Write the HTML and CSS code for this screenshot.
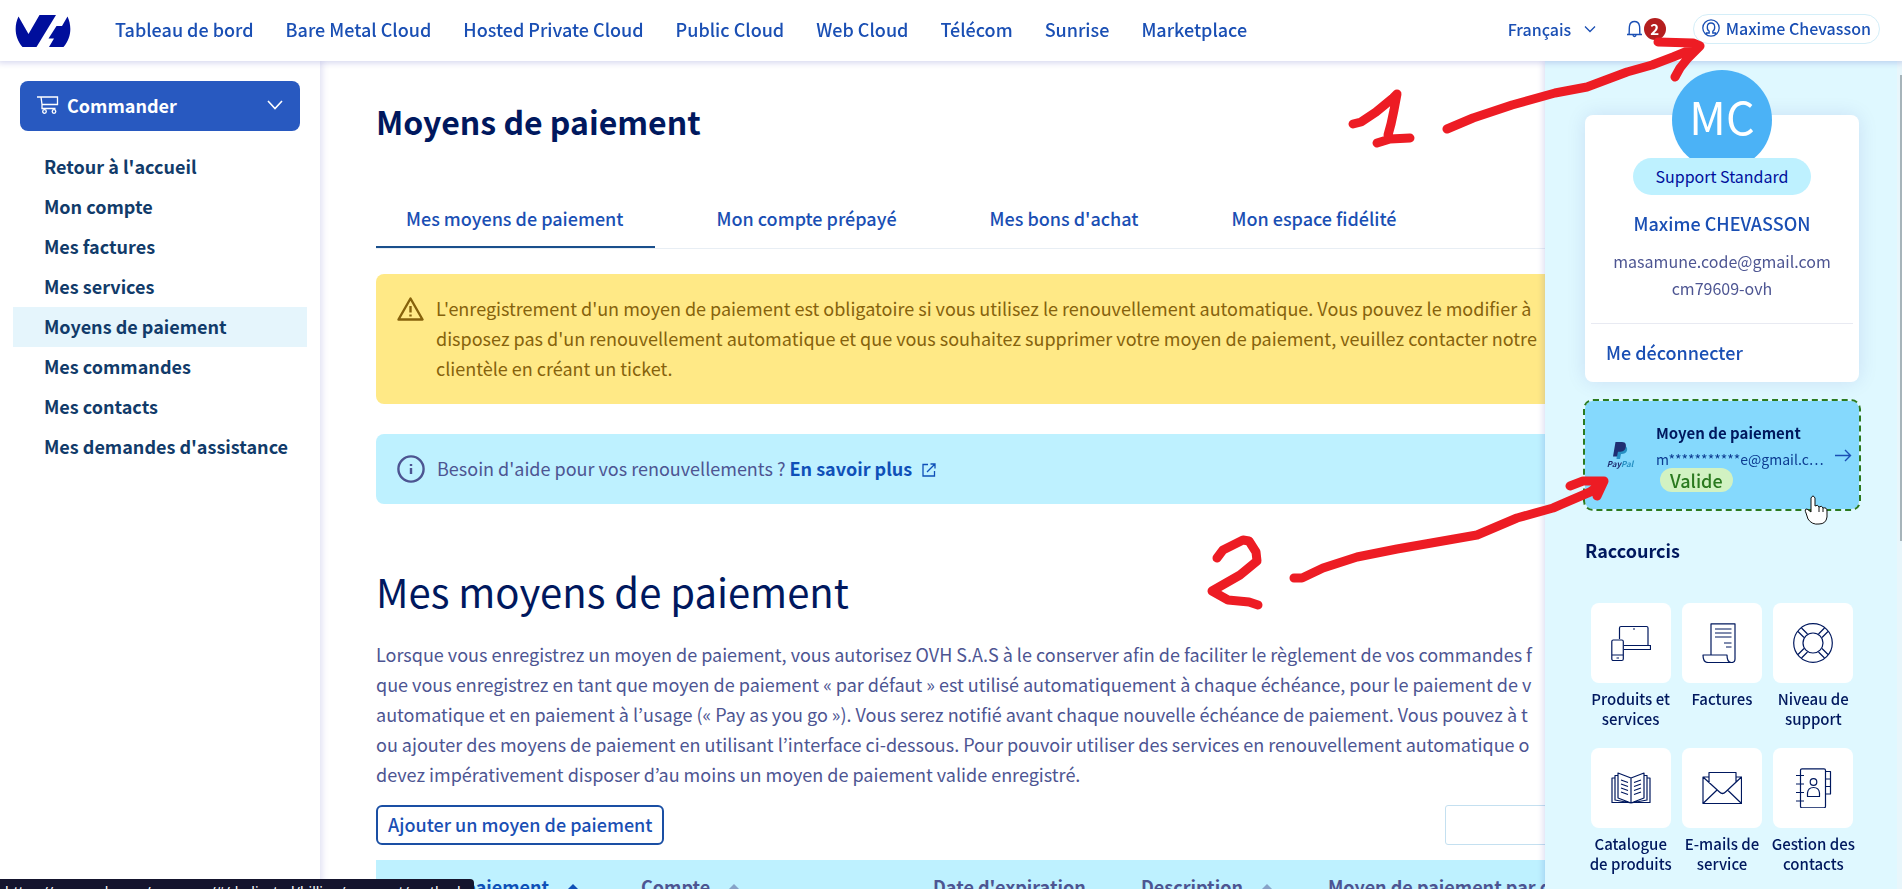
FILE: index.html
```html
<!DOCTYPE html>
<html lang="fr">
<head>
<meta charset="utf-8">
<title>Moyens de paiement</title>
<link rel="stylesheet" href="styles.css">
</head>
<body>
<header class="topbar">
  <a class="logo" href="#" aria-label="OVHcloud">
    <svg width="56" height="34" viewBox="0 0 56 34"><path fill="#000e9c" d="M3.500 2.500 L13.500 20 L24.500 1 H41 L21.500 33 H7.500 C-.5 24 -1 12 3.500 2.500Z M52.500 2.500 C57 12 56.500 24 48.500 33 H34 L39 24.500 H33.500 L41.500 12 H47Z"/></svg>
  </a>
  <nav class="mainnav">
    <a href="#">Tableau de bord</a>
    <a href="#">Bare Metal Cloud</a>
    <a href="#">Hosted Private Cloud</a>
    <a href="#">Public Cloud</a>
    <a href="#">Web Cloud</a>
    <a href="#">Télécom</a>
    <a href="#">Sunrise</a>
    <a href="#">Marketplace</a>
  </nav>
  <div class="tools">
    <div class="lang">
      <select aria-label="Langue"><option>Français</option></select>
      <svg width="12" height="8" viewBox="0 0 12 8"><path d="M1 1.500 L6 6.500 L11 1.500" fill="none" stroke="currentColor" stroke-width="1.300"/></svg>
    </div>
    <button class="bell" aria-label="Notifications">
      <svg width="17" height="18" viewBox="0 0 17 18"><path d="M1 14.500 H16 M3 14.500 C3.500 12 3 9 3.500 6 C4 3 6 1.500 8.500 1.500 S13 3 13.500 6 C14 9 13.500 12 14 14.500 M7 15 C7.200 17 9.800 17 10 15" fill="none" stroke="currentColor" stroke-width="1.400"/></svg>
      <span class="count">2</span>
    </button>
    <button class="user">
      <svg width="18" height="18" viewBox="0 0 18 18"><g fill="none" stroke="currentColor" stroke-width="1.300"><circle cx="9" cy="9" r="8.200"/><path d="M4.500 15.500 V14 H7.200 V12.200 C4.500 10.500 4.300 4 9 4 S13.500 10.500 10.800 12.200 V14 H13.500 V15.500"/></g></svg>
      <span>Maxime Chevasson</span>
    </button>
  </div>
</header>

<div class="layout">
  <aside class="sidebar">
    <button class="order">
      <svg width="22" height="18" viewBox="0 0 22 18"><g fill="none" stroke="currentColor" stroke-width="1.300"><path d="M0 1 H4 L5 8.500 V12.500 H18.500 M4 1 H20.500 V8.500 H5"/><circle cx="7.500" cy="15.500" r="1.800"/><circle cx="17" cy="15.500" r="1.800"/></g></svg>
      <span>Commander</span>
      <svg class="chev" width="16" height="10" viewBox="0 0 16 10"><path d="M1 1 L8 8.500 L15 1" fill="none" stroke="currentColor" stroke-width="1.600"/></svg>
    </button>
    <nav class="menu">
      <a href="#">Retour à l'accueil</a>
      <a href="#">Mon compte</a>
      <a href="#">Mes factures</a>
      <a href="#">Mes services</a>
      <a href="#" class="active">Moyens de paiement</a>
      <a href="#">Mes commandes</a>
      <a href="#">Mes contacts</a>
      <a href="#">Mes demandes d'assistance</a>
    </nav>
  </aside>

  <main class="content">
    <h1>Moyens de paiement</h1>
    <nav class="tabs">
      <a href="#" class="current">Mes moyens de paiement</a>
      <a href="#">Mon compte prépayé</a>
      <a href="#">Mes bons d'achat</a>
      <a href="#">Mon espace fidélité</a>
    </nav>
    <div class="alert warning">
      <svg width="27" height="24" viewBox="0 0 27 24"><g fill="none" stroke="currentColor" stroke-width="2.400" stroke-linejoin="round"><path d="M13.500 1.500 L25.500 22.500 H1.500Z"/><path d="M13.500 9 V15.500 M13.500 17.500 V19.500"/></g></svg>
      <p>L'enregistrement d'un moyen de paiement est obligatoire si vous utilisez le renouvellement automatique. Vous pouvez le modifier à<br>disposez pas d'un renouvellement automatique et que vous souhaitez supprimer votre moyen de paiement, veuillez contacter notre<br>clientèle en créant un ticket.</p>
    </div>
    <div class="alert info">
      <svg width="28" height="28" viewBox="0 0 28 28"><g fill="none" stroke="currentColor" stroke-width="2.400"><circle cx="14" cy="14" r="12.600"/><path d="M14 9 V11 M14 13 V19"/></g></svg>
      <p>Besoin d'aide pour vos renouvellements ? <a href="#">En savoir plus <svg width="14" height="14" viewBox="0 0 14 14"><path d="M6 1.500 H1 V13 H12.500 V8 M8.500 1 H13 V5.500 M13 1 L5 9" fill="none" stroke="currentColor" stroke-width="1.300"/></svg></a></p>
    </div>
    <h2>Mes moyens de paiement</h2>
    <p class="intro">Lorsque vous enregistrez un moyen de paiement, vous autorisez OVH S.A.S à le conserver afin de faciliter le règlement de vos commandes f<br>que vous enregistrez en tant que moyen de paiement « par défaut » est utilisé automatiquement à chaque échéance, pour le paiement de v<br>automatique et en paiement à l’usage (« Pay as you go »). Vous serez notifié avant chaque nouvelle échéance de paiement. Vous pouvez à t<br>ou ajouter des moyens de paiement en utilisant l’interface ci-dessous. Pour pouvoir utiliser des services en renouvellement automatique o<br>devez impérativement disposer d’au moins un moyen de paiement valide enregistré.</p>
    <div class="actions">
      <button class="add">Ajouter un moyen de paiement</button>
      <input type="text" aria-label="Rechercher">
    </div>
    <table class="methods">
      <colgroup><col class="c1"><col class="c2"><col class="c3"><col class="c4"><col></colgroup>
      <thead><tr>
        <th class="sorted">Type de paiement <i class="up"></i></th>
        <th>Compte <i class="up"></i></th>
        <th>Date d'expiration</th>
        <th>Description <i class="up"></i></th>
        <th>Moyen de paiement par défaut</th>
      </tr></thead>
    </table>
  </main>
</div>

<aside class="account">
  <section class="profile">
    <div class="avatar">MC</div>
    <span class="level">Support Standard</span>
    <a class="name" href="#">Maxime CHEVASSON</a>
    <div class="ids">masamune.code@gmail.com<br>cm79609-ovh</div>
    <div class="foot"><a href="#">Me déconnecter</a></div>
  </section>
  <a class="payment" href="#">
    <span class="paypal">
      <svg width="15" height="17" viewBox="0 0 15 17"><path fill="#2790c3" d="M5 4 H12.500 C15.500 6 14.500 12 9 12 H8 L7 17 H3.500Z"/><path fill="#1f2f72" d="M2.500 0 H9 C13 0 13.500 3 12.500 6 C11.500 9.500 8.500 9.800 5 9.800 L4 14.500 H0Z"/></svg>
      <span><b>Pay</b><b class="pal">Pal</b></span>
    </span>
    <span class="detail">
      <strong>Moyen de paiement</strong>
      <span class="mail">m***********e@gmail.c…</span>
      <span class="valid">Valide</span>
    </span>
    <svg class="go" width="17" height="13" viewBox="0 0 17 13"><path d="M0 6.500 H15.500 M10 1 L15.500 6.500 L10 12" fill="none" stroke="currentColor" stroke-width="1.400"/></svg>
  </a>
  <h3>Raccourcis</h3>
  <nav class="shortcuts">
    <a href="#"><span class="tile"><svg width="40" height="40" viewBox="0 0 40 40"><path d="M8.500 16 V5 Q8.500 3.500 10 3.500 H35.500 Q37 3.500 37 5 V22.500 M13 22.500 H39.500 V26.500 H13 M22 6 H24"/><rect x=".8" y="17" width="11.500" height="20.500" rx="1.500"/><path d="M1 32 H12 M5.500 35 H8"/></svg></span>Produits et services</a>
    <a href="#"><span class="tile"><svg width="40" height="40" viewBox="0 0 40 40"><path d="M9 32 V.8 H33 V36 Q33 39.500 29.500 39.500 H6 Q1 39.500 1 32 H25 Q25 39.500 29.500 39.500 M13 6 H29.500 M13 10 H29.500 M13 14 H29.500 M22 20 H29.500 M24 24 H29.500"/></svg></span>Factures</a>
    <a href="#"><span class="tile"><svg width="40" height="40" viewBox="0 0 40 40"><circle cx="20" cy="20" r="19.300"/><circle cx="20" cy="20" r="10"/><path d="M11 14.500 L5 8.500 M14.500 11 L8.500 5 M25.500 11 L31.500 5 M29 14.500 L35 8.500 M29 25.500 L35 31.500 M25.500 29 L31.500 35 M14.500 29 L8.500 35 M11 25.500 L5 31.500"/></svg></span>Niveau de support</a>
    <a href="#"><span class="tile"><svg width="40" height="40" viewBox="0 0 40 40"><path d="M20 10 L7 5 V30 L20 35 L33 30 V5Z M20 10 V35 M7 7.500 H4 V32 L20 35 L36 32 V7.500 H33 M4 10 H1 V34.500 H39 V10 H36 M10 12 L17 14.500 M10 16 L17 18.500 M10 20 L17 22.500 M10 24 L17 26.500 M30 12 L23 14.500 M30 16 L23 18.500 M30 20 L23 22.500 M30 24 L23 26.500"/></svg></span>Catalogue de produits</a>
    <a href="#"><span class="tile"><svg width="40" height="40" viewBox="0 0 40 40"><path d="M7 9 H1 V35.500 H39.500 V9 H34 M7 15 V4.500 H34 V15 M1 9 L17.500 24 Q20.500 27 23.500 24 L39.500 9 M1 35.500 L15 22 M39.500 35.500 L25.500 22"/></svg></span>E-mails de service</a>
    <a href="#"><span class="tile"><svg width="40" height="40" viewBox="0 0 40 40"><rect x="7.500" y=".8" width="25" height="39" rx="1.500"/><circle cx="20.500" cy="14" r="3.300"/><path d="M14.500 28.500 V25 Q15 19.500 20.500 19.500 T26.500 25 V28.500Z M3 7.500 H11 M3 16 H11 M3 24.500 H11 M3 33 H11 M32.500 3.500 H37.500 V26 H32.500 M32.500 11 H37.500 M32.500 18.500 H37.500"/></svg></span>Gestion des contacts</a>
  </nav>
  <div class="scrollbar"><div class="thumb"></div></div>
</aside>

<div class="status">https://www.ovh.com/manager/#/dedicated/billing/payment/method</div>

<svg class="notes" width="1902" height="889" viewBox="0 0 1902 889" aria-hidden="true">
  <g fill="none" stroke="#ed1c24" stroke-width="9" stroke-linecap="round" stroke-linejoin="round">
    <path d="M1353 124 L1361 122 L1376 112 L1393 98 L1397 94 L1394 110 L1391 124 L1388 135 M1377 143 L1390 139 L1410 138"/>
    <path d="M1447 129 L1473 118 L1512 105 L1555 93 L1587 87 L1627 72 L1652 65 L1673 57 L1700 46 M1658 42 L1693 43 L1700 46 L1688 58 L1680 68 L1675 77"/>
    <path d="M1217 558 L1223 550 L1243 540 L1249 541 L1256 552 L1257 561 L1240 575 L1212 591 L1228 600 L1249 602 L1258 605"/>
    <path d="M1294 578 L1302 578 L1323 568 L1357 557 L1397 549 L1477 535 L1517 518 L1553 508 L1590 492 L1600 485 M1570 486 L1583 481 L1604 481 L1597 496"/>
  </g>
  <path d="M1808 519 L1806 513 Q1804 509 1807 509 L1811 512 V498 Q1813 494 1815 498 V506 Q1818 504 1819 507 Q1822 505 1823 508 Q1827 507 1827 511 V517 Q1826 524 1819 524 Q1812 525 1808 519Z M1819 507 V512 M1823 508 V512" fill="#fff" stroke="#111" stroke-width="1"/>
</svg>
</body>
</html>
```
FILE: styles.css
```css
* { box-sizing: border-box; }
body {
  margin: 0;
  height: 100vh;
  overflow: hidden;
  font: 18px/30px "Noto Sans CJK KR", "Noto Sans", sans-serif;
  color: #4d5592;
  background: #fff;
}
a { color: #1a4fb4; text-decoration: none; font-weight: 500; }
button, input, select { font: inherit; color: inherit; }
button { cursor: pointer; }
svg { flex: none; }
p { margin: 0; }

.topbar {
  position: relative;
  z-index: 3;
  display: flex;
  align-items: center;
  height: 61px;
  padding: 0 22px 0 15px;
  background: #fff;
  box-shadow: 0 0 6px 2px rgba(0, 14, 156, .16);
}
.logo { display: flex; margin-right: 44px; }
.mainnav { display: flex; gap: 32px; padding-bottom: 3px; white-space: nowrap; }
.tools {
  display: flex;
  align-items: center;
  margin-left: auto;
  padding-bottom: 3px;
  color: #1a4fb4;
  font-size: 16px;
  font-weight: 500;
}
.lang { display: flex; align-items: center; gap: 12px; }
.lang select { appearance: none; border: 0; padding: 0; background: none; font-weight: 500; }
.bell {
  display: flex;
  align-items: center;
  gap: 1px;
  margin-left: 30px;
  padding: 0;
  border: 0;
  background: none;
}
.count {
  width: 22px;
  border-radius: 50%;
  background: #b41e1e;
  color: #fff;
  font-size: 15px;
  font-weight: 700;
  line-height: 22px;
}
.user {
  display: flex;
  align-items: center;
  gap: 6px;
  height: 30px;
  margin-left: 27px;
  padding: 0 8px 2px;
  border: 1px solid #d4eef8;
  border-radius: 15px;
  background: #fff;
  font-weight: 500;
}

.layout { display: flex; height: calc(100vh - 61px); }
.sidebar {
  flex: none;
  width: 320px;
  padding: 20px 13px;
  box-shadow: 0 0 8px 1px rgba(0, 14, 156, .16);
}
.order {
  display: flex;
  align-items: center;
  gap: 8px;
  width: 280px;
  height: 50px;
  margin: 0 7px 16px;
  padding: 0 17px 2px;
  border: 0;
  border-radius: 8px;
  background: #2859c0;
  color: #fff;
  font-weight: 600;
}
.order .chev { margin-left: auto; }
.menu { display: flex; flex-direction: column; }
.menu a { padding: 4px 0 6px 31px; color: #113b6a; font-weight: 600; white-space: nowrap; }
.menu a.active { background: #e5f5fc; }

.content { flex: 1; min-width: 0; padding: 38px 57px 0 56px; white-space: nowrap; }
h1, h2, h3 { margin: 0; color: #00185e; }
h1 { font-size: 32px; line-height: 44px; font-weight: 600; }
h2 { margin: 59px 0 20px; font-size: 40px; line-height: 56px; font-weight: 400; }
.tabs { display: flex; gap: 31px; margin: 61px 0 25px; border-bottom: 1px solid #e8eef4; }
.tabs a {
  padding: 0 32px 14px 30px;
  border-bottom: 2px solid transparent;
  line-height: 28px;
}
.tabs a.current { border-color: #1a4f8c; }
.alert {
  display: flex;
  align-items: flex-start;
  gap: 12px;
  margin-bottom: 30px;
  padding: 19px 21px 21px;
  border-radius: 8px;
  overflow: hidden;
}
.warning { background: #ffe986; color: #86620c; }
.warning svg { margin-top: 4px; }
.info { background: #bef1ff; }
.info > svg { margin-top: 2px; }
.info a { color: #0f50b8; font-weight: 600; }
.info a svg { margin: 0 0 -1px 6px; }
.actions { display: flex; justify-content: space-between; margin: 16px 0 15px; }
.add {
  height: 40px;
  padding: 0 10px 2px;
  border: 2px solid #1a4fa4;
  border-radius: 6px;
  background: #fff;
  color: #1a4fb4;
  font-weight: 500;
}
.actions input { width: 400px; height: 40px; border: 1px solid #c4e0f0; border-radius: 3px; }
.methods { width: 100%; table-layout: fixed; border-collapse: collapse; background: #bef1ff; }
.methods th { padding: 11px 0 13px 28px; text-align: left; font-weight: 600; }
.methods .sorted { padding-left: 15px; color: #0f50b8; }
.c1 { width: 237px; }
.c2 { width: 292px; }
.c3 { width: 208px; }
.c4 { width: 187px; }
.up {
  display: inline-block;
  margin: 0 0 5px 15px;
  border: 5px solid transparent;
  border-top: 0;
  border-bottom-color: currentColor;
  opacity: .5;
}
.sorted .up { opacity: 1; }

.account {
  position: fixed;
  z-index: 2;
  top: 61px;
  right: 0;
  bottom: 0;
  width: 357px;
  padding: 54px 43px 0 40px;
  background: #dff8ff;
  box-shadow: 0 0 8px rgba(0, 14, 156, .2);
}
.profile {
  display: flex;
  flex-direction: column;
  align-items: center;
  border-radius: 8px;
  background: #fff;
  box-shadow: 0 0 20px rgba(0, 14, 156, .1);
}
.avatar {
  width: 100px;
  height: 100px;
  margin-top: -45px;
  border-radius: 50%;
  background: #4bb2f6;
  color: #fff;
  font-size: 45px;
  line-height: 92px;
  text-align: center;
}
.level {
  z-index: 1;
  margin-top: -12px;
  padding: 0 22px;
  border-radius: 19px;
  background: #bef1ff;
  color: #000e9c;
  font-size: 16px;
  line-height: 37px;
}
.name { margin: 13px 0 10px; }
.ids { font-size: 16px; line-height: 27px; text-align: center; }
.foot {
  align-self: stretch;
  margin: 21px 6px 0;
  padding: 14px 15px 15px;
  border-top: 1px solid #e8eaf2;
  line-height: 29px;
}
.payment {
  display: flex;
  align-items: center;
  height: 108px;
  margin: 19px 0 27px;
  padding: 0 15px 0 22px;
  border-radius: 8px;
  outline: 2px dashed #2b7a1f;
  background: #85d9fd;
}
.paypal {
  display: flex;
  flex-direction: column;
  align-items: center;
  width: 26px;
  color: #1f2f72;
  font-size: 8px;
  line-height: 10px;
  font-style: italic;
}
.pal { color: #2790c3; }
.detail {
  display: flex;
  flex-direction: column;
  align-items: flex-start;
  flex: 1;
  margin: 0 11px 0 23px;
  white-space: nowrap;
}
.detail strong { color: #00185e; font-size: 15px; line-height: 28px; font-weight: 600; }
.mail { color: #0b3a90; font-size: 14px; line-height: 24px; font-weight: 400; }
.valid {
  margin: -3px 0 0 4px;
  padding: 0 10px;
  border-radius: 12px;
  background: #d2f2c2;
  color: #2b7a1f;
  line-height: 24px;
}
h3 { font-size: 18px; line-height: 28px; font-weight: 600; }
.shortcuts { display: grid; grid-template-columns: repeat(3, 1fr); row-gap: 19px; margin-top: 39px; }
.shortcuts a {
  display: flex;
  flex-direction: column;
  align-items: center;
  color: #00185e;
  font-size: 15px;
  line-height: 20px;
  text-align: center;
}
.tile {
  display: flex;
  align-items: center;
  justify-content: center;
  width: 80px;
  height: 80px;
  margin-bottom: 6px;
  border-radius: 8px;
  background: #fff;
}
.tile svg { fill: none; stroke: #00185e; stroke-width: 1.2; stroke-linejoin: round; }
.scrollbar {
  position: absolute;
  top: 0;
  right: 0;
  bottom: 0;
  width: 5px;
  padding: 14px 0 0 3px;
  background: #e8f6fb;
}
.thumb { height: 466px; background: #a6b4ba; }

.status {
  position: fixed;
  z-index: 4;
  left: 0;
  bottom: 0;
  width: 474px;
  height: 10px;
  overflow: hidden;
  padding-left: 5px;
  border-top-right-radius: 4px;
  background: #15152e;
  color: #fff;
  font: 14px/26px "Noto Sans", sans-serif;
  white-space: nowrap;
}
.notes { position: absolute; z-index: 5; top: 0; left: 0; pointer-events: none; }
```
